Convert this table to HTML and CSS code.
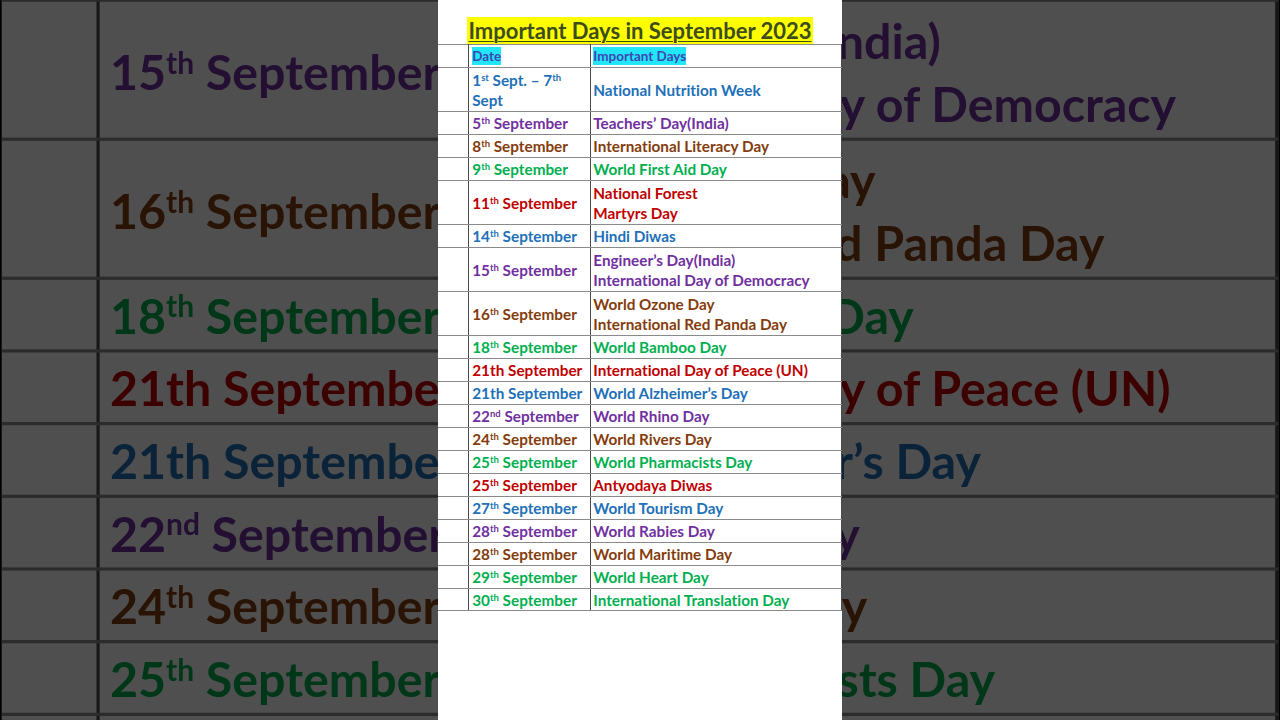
FILE: index.html
```html
<!DOCTYPE html>
<html lang="en">
<head>
<meta charset="utf-8">
<title>Important Days in September 2023</title>
<link rel="stylesheet" href="styles.css">
</head>
<body>
<div class="screen">
  <div class="layer backdrop" aria-hidden="true">
    <div class="panel">
      <div class="title">Important Days in September 2023</div>
      <table class="days">
        <colgroup><col class="c0"><col class="c1"><col class="c2"></colgroup>
        <tr class="head"><td></td><td><span class="hl">Date</span></td><td><span class="hl">Important Days</span></td></tr>
        <tr class="blue tall"><td></td><td>1<sup>st</sup> Sept. – 7<sup>th</sup><br>Sept</td><td>National Nutrition Week</td></tr>
        <tr class="purple"><td></td><td>5<sup>th</sup> September</td><td>Teachers’ Day(India)</td></tr>
        <tr class="brown"><td></td><td>8<sup>th</sup> September</td><td>International Literacy Day</td></tr>
        <tr class="green"><td></td><td>9<sup>th</sup> September</td><td>World First Aid Day</td></tr>
        <tr class="red tall"><td></td><td>11<sup>th</sup> September</td><td>National Forest<br>Martyrs Day</td></tr>
        <tr class="blue"><td></td><td>14<sup>th</sup> September</td><td>Hindi Diwas</td></tr>
        <tr class="purple tall"><td></td><td>15<sup>th</sup> September</td><td>Engineer’s Day(India)<br>International Day of Democracy</td></tr>
        <tr class="brown tall"><td></td><td>16<sup>th</sup> September</td><td>World Ozone Day<br>International Red Panda Day</td></tr>
        <tr class="green"><td></td><td>18<sup>th</sup> September</td><td>World Bamboo Day</td></tr>
        <tr class="red"><td></td><td>21th September</td><td>International Day of Peace (UN)</td></tr>
        <tr class="blue"><td></td><td>21th September</td><td>World Alzheimer’s Day</td></tr>
        <tr class="purple"><td></td><td>22<sup>nd</sup> September</td><td>World Rhino Day</td></tr>
        <tr class="brown"><td></td><td>24<sup>th</sup> September</td><td>World Rivers Day</td></tr>
        <tr class="green"><td></td><td>25<sup>th</sup> September</td><td>World Pharmacists Day</td></tr>
        <tr class="red"><td></td><td>25<sup>th</sup> September</td><td>Antyodaya Diwas</td></tr>
        <tr class="blue"><td></td><td>27<sup>th</sup> September</td><td>World Tourism Day</td></tr>
        <tr class="purple"><td></td><td>28<sup>th</sup> September</td><td>World Rabies Day</td></tr>
        <tr class="brown"><td></td><td>28<sup>th</sup> September</td><td>World Maritime Day</td></tr>
        <tr class="green"><td></td><td>29<sup>th</sup> September</td><td>World Heart Day</td></tr>
        <tr class="green"><td></td><td>30<sup>th</sup> September</td><td>International Translation Day</td></tr>
      </table>
    </div>
  </div>
  <div class="layer front">
    <div class="panel">
      <h1 class="title">Important Days in September 2023</h1>
      <table class="days">
        <colgroup><col class="c0"><col class="c1"><col class="c2"></colgroup>
        <tr class="head"><td></td><td><span class="hl">Date</span></td><td><span class="hl">Important Days</span></td></tr>
        <tr class="blue tall"><td></td><td>1<sup>st</sup> Sept. – 7<sup>th</sup><br>Sept</td><td>National Nutrition Week</td></tr>
        <tr class="purple"><td></td><td>5<sup>th</sup> September</td><td>Teachers’ Day(India)</td></tr>
        <tr class="brown"><td></td><td>8<sup>th</sup> September</td><td>International Literacy Day</td></tr>
        <tr class="green"><td></td><td>9<sup>th</sup> September</td><td>World First Aid Day</td></tr>
        <tr class="red tall"><td></td><td>11<sup>th</sup> September</td><td>National Forest<br>Martyrs Day</td></tr>
        <tr class="blue"><td></td><td>14<sup>th</sup> September</td><td>Hindi Diwas</td></tr>
        <tr class="purple tall"><td></td><td>15<sup>th</sup> September</td><td>Engineer’s Day(India)<br>International Day of Democracy</td></tr>
        <tr class="brown tall"><td></td><td>16<sup>th</sup> September</td><td>World Ozone Day<br>International Red Panda Day</td></tr>
        <tr class="green"><td></td><td>18<sup>th</sup> September</td><td>World Bamboo Day</td></tr>
        <tr class="red"><td></td><td>21th September</td><td>International Day of Peace (UN)</td></tr>
        <tr class="blue"><td></td><td>21th September</td><td>World Alzheimer’s Day</td></tr>
        <tr class="purple"><td></td><td>22<sup>nd</sup> September</td><td>World Rhino Day</td></tr>
        <tr class="brown"><td></td><td>24<sup>th</sup> September</td><td>World Rivers Day</td></tr>
        <tr class="green"><td></td><td>25<sup>th</sup> September</td><td>World Pharmacists Day</td></tr>
        <tr class="red"><td></td><td>25<sup>th</sup> September</td><td>Antyodaya Diwas</td></tr>
        <tr class="blue"><td></td><td>27<sup>th</sup> September</td><td>World Tourism Day</td></tr>
        <tr class="purple"><td></td><td>28<sup>th</sup> September</td><td>World Rabies Day</td></tr>
        <tr class="brown"><td></td><td>28<sup>th</sup> September</td><td>World Maritime Day</td></tr>
        <tr class="green"><td></td><td>29<sup>th</sup> September</td><td>World Heart Day</td></tr>
        <tr class="green"><td></td><td>30<sup>th</sup> September</td><td>International Translation Day</td></tr>
      </table>
    </div>
  </div>
</div>
</body>
</html>
```
FILE: styles.css
```css
html, body {
  margin: 0;
  padding: 0;
  background: #000;
}

body {
  font-family: Lato, "Liberation Sans", sans-serif;
  font-variant-ligatures: none;
}

.screen {
  width: 1280px;
  height: 720px;
  display: grid;
  overflow: hidden;
}

.layer {
  grid-area: 1 / 1;
  display: flex;
  justify-content: center;
}

.backdrop {
  z-index: 0;
  transform: scale(3.16);
  transform-origin: 640px 362px;
  filter: brightness(0.31);
}

.front {
  z-index: 1;
}

.panel {
  width: 404px;
  height: 720px;
  background: #fff;
  display: flex;
  flex-direction: column;
  align-items: center;
}

.title {
  margin: 17px 0 0;
  padding: 0 1px;
  background: #ffff00;
  color: #3d4c1c;
  font-size: 22px;
  line-height: 27px;
  font-weight: 700;
  text-decoration: underline;
  text-decoration-thickness: 1px;
  text-underline-offset: 2px;
  white-space: nowrap;
}

.days {
  width: 404px;
  border-collapse: collapse;
  table-layout: fixed;
  font-size: 15.3px;
  line-height: 20px;
  font-weight: 700;
}

.c0 { width: 31px; }
.c1 { width: 122px; }
.c2 { width: 251px; }

.days tr {
  height: 23px;
}

.days tr.tall {
  height: 44px;
}

.days tr:last-child {
  height: 22px;
}

.days td {
  padding: 0 2px 0 3px;
  border-style: solid;
  border-width: 1px;
  border-color: #8a8a8a #4a4a4a;
  vertical-align: middle;
  white-space: nowrap;
  overflow: hidden;
}

.days td:first-child {
  border-left: 0;
}

.days td:last-child {
  padding-left: 2px;
}

.days sup {
  font-size: 0.62em;
  line-height: 0;
  vertical-align: 0.55em;
}

.head td {
  font-size: 13.5px;
  color: #3c46b4;
}

.hl {
  background: #22e6f6;
  padding: 1px 0;
}

.blue { color: #2170b8; }
.purple { color: #7030a0; }
.brown { color: #843c0c; }
.green { color: #00b050; }
.red { color: #c00000; }
```
